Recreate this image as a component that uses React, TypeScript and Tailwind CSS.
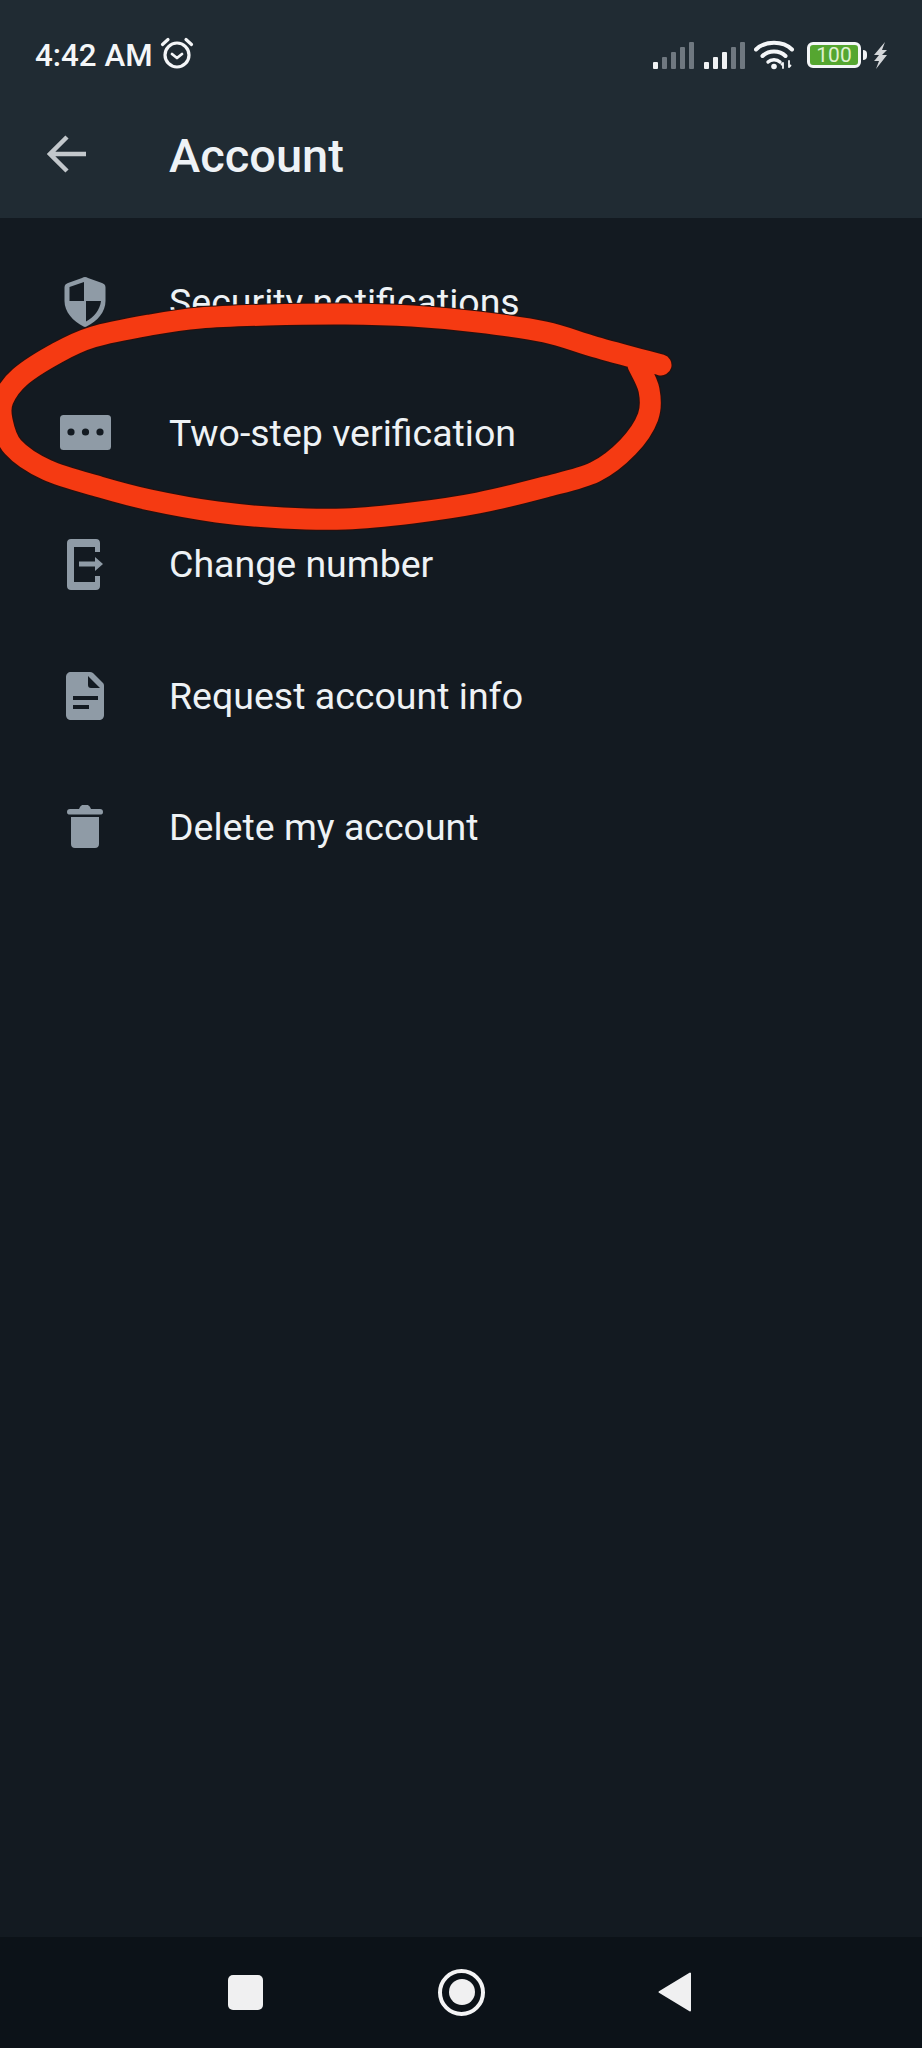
const rows = [
  { label: "Security notifications", icon: <Shield /> },
  { label: "Two-step verification", icon: <Dots /> },
  { label: "Change number", icon: <ChangeNumber /> },
  { label: "Request account info", icon: <Doc /> },
  { label: "Delete my account", icon: <Trash /> },
];

function Shield() {
  return (
    <svg width="42" height="50" viewBox="0 0 42 50">
      <path fillRule="evenodd" fill="#8f9ba6" d="M21 0c1 0 2 .4 3 1l14 5c2 .8 3.500 2 3.500 4.500V24c0 11-8 20-19 25.500-1 .5-2 .5-3 0C9 44 .5 35 .5 24V10.500C.5 8 2 6.800 4 6l14-5c1-.6 2-1 3-1Z" />
      <path fill="#131a21" d="M20 5 5.500 10V24H20ZM22 24H37C36 33 30 40 22 44.500Z" />
    </svg>
  );
}
function Dots() {
  return (
    <svg width="51" height="35" viewBox="0 0 51 35">
      <rect width="51" height="35" rx="3.500" fill="#8f9ba6" />
      <circle cx="11" cy="17" r="3.600" fill="#131a21" />
      <circle cx="25.500" cy="17" r="3.600" fill="#131a21" />
      <circle cx="40" cy="17" r="3.600" fill="#131a21" />
    </svg>
  );
}
function ChangeNumber() {
  return (
    <svg width="36" height="51" viewBox="0 0 36 51">
      <path fill="#8f9ba6" fillRule="evenodd" d="M4 0h25c2.500 0 4 1.500 4 4v9h-5V8H7v35h21v-6h5v10c0 2.500-1.500 4-4 4H4c-2.500 0-4-1.500-4-4V4c0-2.500 1.500-4 4-4Z" />
      <path fill="#8f9ba6" d="M12 22.500h16V18l8 7-8 7v-4.500H12Z" />
    </svg>
  );
}
function Doc() {
  return (
    <svg width="38" height="48" viewBox="0 0 38 48">
      <path fill="#8f9ba6" d="M5 0h19c1 0 2 .4 3 1l10 10c.7.8 1 1.600 1 3v29c0 3-2 5-5 5H5c-3 0-5-2-5-5V5c0-3 2-5 5-5Z" />
      <path fill="#131a21" d="M22 4 34 16H25c-2 0-3-1-3-3ZM7 24h25v4H7ZM7 33h16v4H7Z" />
    </svg>
  );
}
function Trash() {
  return (
    <svg width="36" height="43" viewBox="0 0 36 43">
      <path fill="#8f9ba6" d="M13 2c1-1.500 2-2 3-2h4c1 0 2 .5 3 2l1 2h9c2 0 3 1 3 3s-1 2.500-3 2.500H3C1 9.500 0 9 0 7s1-3 3-3h9ZM4 12h28v27c0 2.500-1.500 4-4 4H8c-2.500 0-4-1.500-4-4Z" />
    </svg>
  );
}
function Alarm() {
  return (
    <svg width="34" height="32" viewBox="0 0 33 32" fill="none" stroke="#f4f6f8" strokeLinecap="round">
      <circle cx="16.500" cy="18" r="12" strokeWidth="3.200" />
      <path d="m11.500 17 5 4 5-4" strokeWidth="2.800" strokeLinejoin="round" />
      <path d="M2 7.500 7.500 2.500M31 7.500 25.500 2.500" strokeWidth="3.200" />
    </svg>
  );
}
function Signal({ lit }: { lit: number }) {
  const bars = [
    { x: 0, y: 20, h: 7 },
    { x: 9, y: 15, h: 12 },
    { x: 18, y: 10, h: 17 },
    { x: 27, y: 5, h: 22 },
    { x: 36, y: 0, h: 27 },
  ];
  return (
    <svg width="41" height="27" viewBox="0 0 41 27">
      {bars.map((b, i) => (
        <rect key={i} x={b.x} y={b.y} width="5" height={b.h} rx="1" fill={i < lit ? "#f0f2f4" : "#6f7880"} />
      ))}
    </svg>
  );
}
function Wifi() {
  return (
    <svg width="41" height="30" viewBox="0 0 41 30" fill="none" stroke="#f4f6f8" strokeLinecap="round">
      <path d="M2 9.500C11 .5 29 .5 38 9.500" strokeWidth="4" />
      <path d="M8.500 16c6-6 17-6 23 0" strokeWidth="4" />
      <path d="M14 22c3-3 9-3 12 0" strokeWidth="3.400" />
      <circle cx="20" cy="26.500" r="2.800" fill="#f4f6f8" stroke="none" />
      <path d="M29 23v5M27.500 24.500 29 23M35 21v6M36.500 25.500 35 27" strokeWidth="1.800" />
    </svg>
  );
}
function Bolt() {
  return (
    <svg width="15" height="27" viewBox="0 0 15 27">
      <path fill="#d4d7da" d="M12 0 1 13h5L2 18l-1 1h5L3 27 14 13H9l1-1 4-4H9Z" />
    </svg>
  );
}

const scribblePoints: [number, number][] = [
  [661, 365], [595, 347], [545, 332], [478, 322], [412, 316], [345, 314], [267, 315], [200, 318],
  [150, 325], [93, 337], [57, 353], [20, 377], [3, 400], [2, 420], [13, 447], [47, 470], [100, 487],
  [150, 500], [217, 512], [283, 518], [345, 519], [412, 513], [478, 503], [545, 487], [595, 472],
  [628, 447], [648, 417], [649, 390], [638, 365],
];
function smoothPath(p: [number, number][]) {
  let d = `M${p[0][0]} ${p[0][1]}`;
  for (let i = 0; i < p.length - 1; i++) {
    const a = p[Math.max(i - 1, 0)];
    const b = p[i];
    const c = p[i + 1];
    const e = p[Math.min(i + 2, p.length - 1)];
    d += `C${b[0] + (c[0] - a[0]) / 6} ${b[1] + (c[1] - a[1]) / 6} ${c[0] - (e[0] - b[0]) / 6} ${c[1] - (e[1] - b[1]) / 6} ${c[0]} ${c[1]}`;
  }
  return d;
}
function Scribble() {
  const d = smoothPath(scribblePoints);
  return (
    <svg className="absolute left-0 top-0" width="922" height="640" viewBox="0 0 922 640" fill="none" strokeLinecap="round" strokeLinejoin="round">
      <path d={d} stroke="#2c0f0c" strokeWidth="23" />
      <path d={d} stroke="#f53a12" strokeWidth="21" />
    </svg>
  );
}

export default function App() {
  return (
    <div className="relative flex h-[2048px] w-[922px] flex-col overflow-hidden bg-[#131a21] font-['Roboto',sans-serif]">
      <header className="h-[218px] shrink-0 bg-[#202b33]">
        <div className="flex h-[110px] items-center justify-between pl-[35px] pr-[34px]">
          <div className="flex items-center gap-[7px] pt-[2px]">
            <span className="text-[31.300px] font-medium leading-none text-[#f4f6f8]">4:42 AM</span>
            <span className="-mt-[5px]"><Alarm /></span>
          </div>
          <div className="flex items-center">
            <Signal lit={1} />
            <span className="ml-[10px]"><Signal lit={3} /></span>
            <span className="ml-[9px]"><Wifi /></span>
            <div className="ml-[12px] flex h-[26px] w-[54px] items-center justify-center rounded-[6px] border-[3px] border-[#f4f6f8] bg-[#55a630] text-[21px] leading-none text-[#dff0d0]">100</div>
            <div className="ml-[2px] h-[10px] w-[4px] rounded-r-sm bg-[#f0f2f4]" />
            <span className="ml-[6px]"><Bolt /></span>
          </div>
        </div>
        <div className="flex h-[88px] items-center">
          <div className="flex w-[170px] justify-start pl-[47px]">
            <svg width="39" height="38" viewBox="0 0 39 38" fill="none" stroke="#c3c8cc" strokeWidth="4.500">
              <path d="M39 19H4M20 2 3 19l17 17" />
            </svg>
          </div>
          <span className="-ml-[1px] pt-[2px] text-[47px] font-medium leading-none text-[#eef2f6]">Account</span>
        </div>
      </header>
      <main className="flex-1 pt-[18px]">
        {rows.map((r) => (
          <div key={r.label} className="flex h-[131.300px] items-center">
            <div className="flex w-[170px] shrink-0 justify-center">{r.icon}</div>
            <span className="-ml-[1px] pt-[2px] text-[37.5px] leading-none text-[#eef2f5]">{r.label}</span>
          </div>
        ))}
      </main>
      <nav className="flex h-[111px] shrink-0 items-center bg-[#0c1218] pb-[1px]">
        <div className="ml-[228px] h-[35px] w-[35px] rounded-[5px] bg-[#f0f0f1]" />
        <div className="ml-[175px] flex h-[47px] w-[47px] items-center justify-center rounded-full border-[4px] border-[#f4f4f5]">
          <div className="h-[26px] w-[26px] rounded-full bg-[#f0f0f1]" />
        </div>
        <svg className="ml-[173px]" width="33" height="40" viewBox="0 0 33 40">
          <path fill="#f0f0f1" stroke="#f0f0f1" strokeWidth="2" strokeLinejoin="round" d="M32 1.500V38.500L1.500 20Z" />
        </svg>
      </nav>
      <Scribble />
    </div>
  );
}
